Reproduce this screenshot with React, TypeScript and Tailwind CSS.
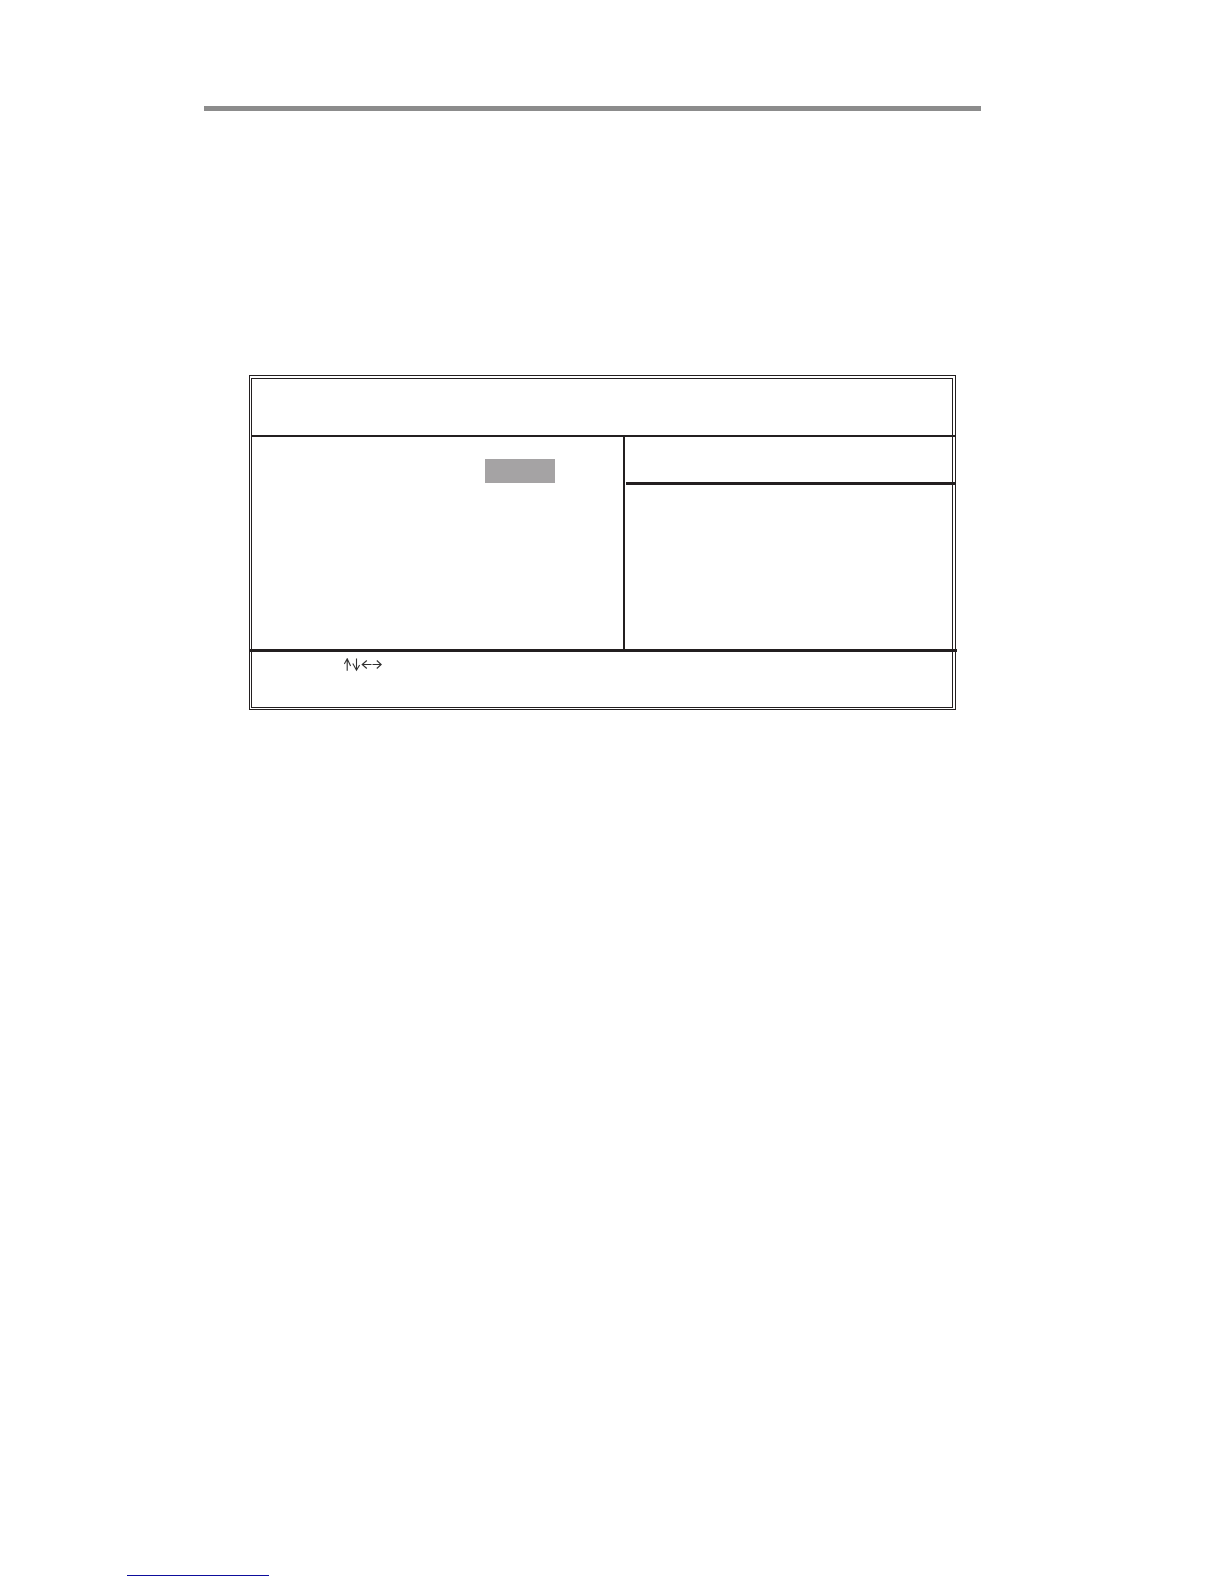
import React from 'react';

const ArrowKeys: React.FC = () => (
  <svg
    role="img"
    aria-label="Arrow keys"
    width="38"
    height="14"
    viewBox="0 0 38 14"
    fill="none"
    stroke="#303030"
    strokeWidth="1.1"
  >
    {/* up */}
    <path d="M3.2 0.5V12.7M0.3 6L3.2 0.8L6.6 8" />
    {/* down */}
    <path d="M12.5 0.5V12.5M8.8 5.5L12.5 12.2L15.6 7" />
    {/* left */}
    <path d="M18 6.5H27.5M22.8 2.5L18.2 6.5L22.8 10.5" />
    {/* right */}
    <path d="M28.5 6.5H37.5M32.8 2.5L37.2 6.5L32.8 10.5" />
  </svg>
);

const SetupScreen: React.FC = () => (
  <section className="border border-[#231f20] pt-0.5 pr-0.5 pb-px pl-px">
    <div className="border border-[#231f20]">
      <header className="h-14" />
      {/* the rules run through the double frame */}
      <div className="-ml-px -mr-1 h-0.5 bg-[#231f20]" />

      <div className="flex min-h-[212px]">
        <div className="w-[53%] pt-[22px]">
          <div className="ml-[233px] h-6 w-[70px] bg-[#a5a3a4]" />
        </div>
        <div className="flex-1 border-l-2 border-[#231f20]">
          <div className="h-[45px]" />
          <div className="ml-px -mr-1 h-[3px] bg-[#231f20]" />
        </div>
      </div>

      <div className="-ml-[3px] -mr-[5px] h-[3px] bg-[#231f20]" />
      <footer className="min-h-[55px] pt-1.5 pl-[92px]">
        <ArrowKeys />
      </footer>
    </div>
  </section>
);

export default function App() {
  return (
    <div className="flex min-h-screen flex-col bg-white pb-2">
      <main className="pt-[106px] pr-[243px] pl-[204px]">
        <div className="h-[5px] bg-[#8c8c8c]" />
        <div className="pt-[264px] pr-[25px] pl-[45px]">
          <SetupScreen />
        </div>
      </main>

      <footer className="mt-auto pl-[127px]">
        <div className="h-px w-[142px] bg-[#0d0d9c]" />
      </footer>
    </div>
  );
}
